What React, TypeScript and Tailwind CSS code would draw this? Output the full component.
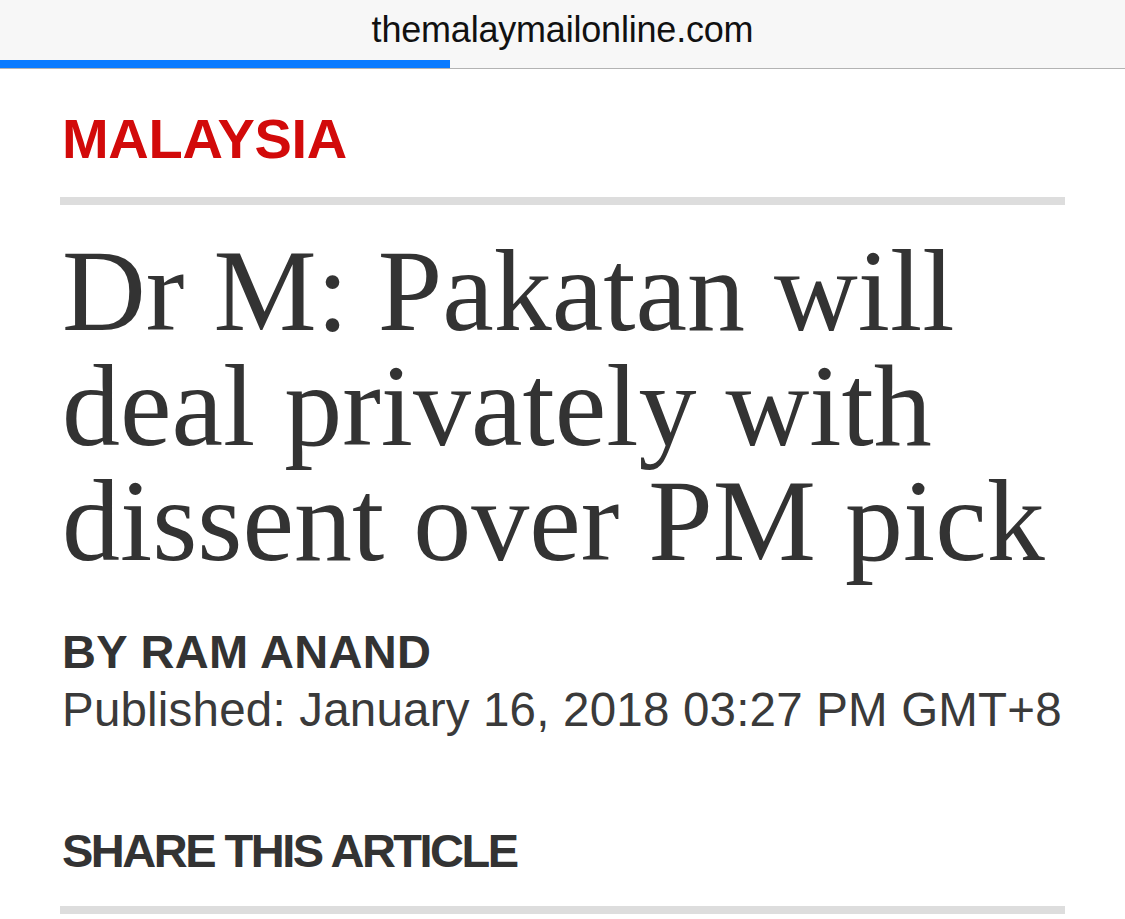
export default function App() {
  return (
    <div className="min-h-screen w-[1125px] bg-white overflow-hidden">
      {/* Browser address bar */}
      <div className="relative h-[69px] bg-[#f7f7f7] border-b border-[#b3b3b3]">
        <div className="flex justify-center pt-[12px]">
          <span className="text-[36px] leading-none text-[#111] tracking-[-0.2px]" style={{ fontFamily: '"Liberation Sans", Arial, sans-serif' }}>
            themalaymailonline.com
          </span>
        </div>
        <div className="absolute left-0 bottom-0 h-[8px] w-[450px] bg-[#0a7bff]" />
      </div>

      <div className="px-[60px]" style={{ fontFamily: '"Liberation Sans", Arial, sans-serif' }}>
        <div className="mt-[42px] px-[2px] text-[56px] leading-none font-bold text-[#d20a0a] tracking-[-0.3px]">
          MALAYSIA
        </div>
        <div className="mt-[30px] h-[8px] bg-[#dddddd]" />

        <h1
          className="mt-[29px] px-[2px] text-[116px] leading-[115px] text-[#333333] whitespace-nowrap"
          style={{ fontFamily: '"Liberation Serif", Georgia, serif' }}
        >
          Dr M: Pakatan will
          <br />
          deal privately with
          <br />
          dissent over PM pick
        </h1>

        <div className="mt-[49px] px-[2px] text-[47px] leading-none font-bold text-[#333333] tracking-[0.3px]">BY RAM ANAND</div>
        <div className="mt-[11px] px-[2px] text-[47.5px] leading-none text-[#3a3a3a] whitespace-nowrap tracking-[0.2px]">
          Published: January 16, 2018 03:27 PM GMT+8
        </div>

        <div className="mt-[93px] px-[2px] text-[47px] leading-none font-bold text-[#333333] tracking-[-2.5px]">
          SHARE THIS ARTICLE
        </div>
        <div className="mt-[32px] h-[8px] bg-[#dddddd]" />
      </div>
    </div>
  );
}
